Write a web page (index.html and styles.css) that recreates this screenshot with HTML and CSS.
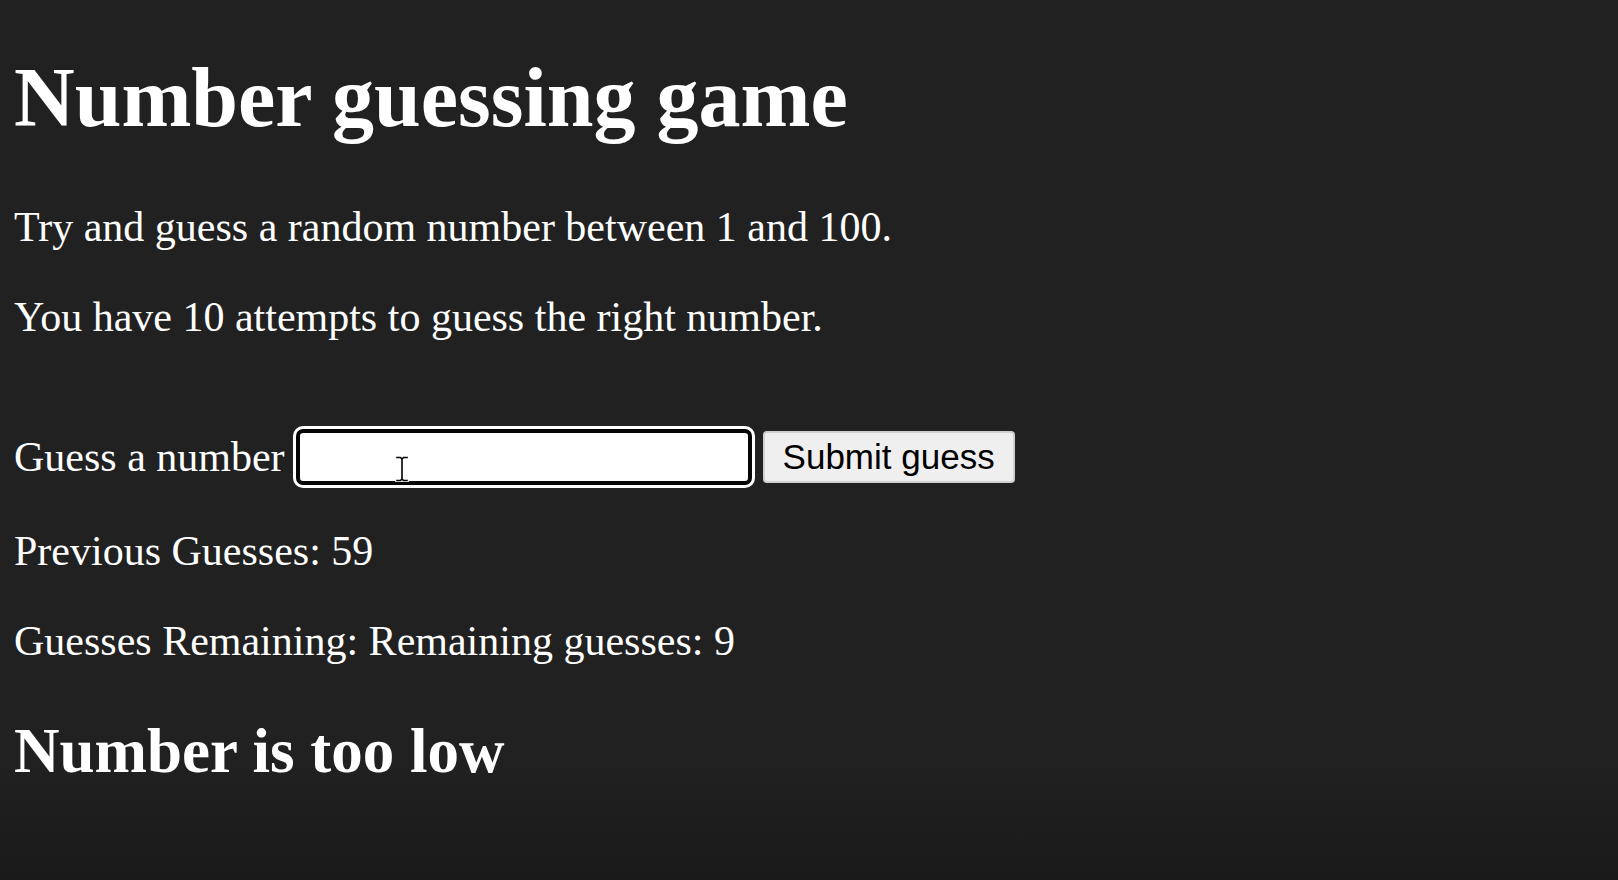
FILE: index.html
```html
<!DOCTYPE html>
<html lang="en">
<head>
<meta charset="utf-8">
<title>Number guessing game</title>
<link rel="stylesheet" href="styles.css">
</head>
<body>
<main class="page">
  <h1 class="title">Number guessing game</h1>
  <p class="text">Try and guess a random number between 1 and 100.</p>
  <p class="text">You have 10 attempts to guess the right number.</p>
  <div class="form-row">
    <label class="label" for="guessField">Guess a number</label>
    <div class="field-wrap">
      <input class="guess-field" id="guessField" type="text">
      <svg class="ibeam" width="14" height="26" viewBox="0 0 14 26" aria-hidden="true">
        <path d="M2 1.5h3.5l1.5 1.5l1.5-1.5H12M7 3v20M2 24.5h3.5l1.5-1.5l1.5 1.5H12" fill="none" stroke="#fff" stroke-width="3.5" stroke-linecap="square"/>
        <path d="M2 1.5h3.5l1.5 1.5l1.5-1.5H12M7 3v20M2 24.5h3.5l1.5-1.5l1.5 1.5H12" fill="none" stroke="#000" stroke-width="1.6" stroke-linecap="square"/>
      </svg>
    </div>
    <button class="submit" type="button">Submit guess</button>
  </div>
  <div class="results">
    <p class="text">Previous Guesses: 59</p>
    <p class="text">Guesses Remaining: Remaining guesses: 9</p>
    <h2 class="status">Number is too low</h2>
  </div>
</main>
</body>
</html>
```

FILE: styles.css
```css
html, body {
  margin: 0;
  padding: 0;
}

body {
  min-height: 880px;
  background: linear-gradient(to bottom, #212121 0%, #212121 86%, #1a1a1a 100%);
  color: #ffffff;
  font-family: "Liberation Serif", "Times New Roman", serif;
  overflow: hidden;
}

.page {
  padding: 0 0 0 14px;
  display: flow-root;
}

.title {
  font-size: 84px;
  font-weight: bold;
  line-height: 1.15;
  margin: 50px 0 56px;
}

.text {
  font-size: 42px;
  line-height: 1.15;
  margin: 0 0 42px;
}

.form-row {
  display: flex;
  align-items: center;
  gap: 11px;
  margin: 86px 0 41px;
  height: 59px;
}

.label {
  font-size: 42px;
  line-height: 1.15;
}

.field-wrap {
  position: relative;
  display: flex;
}

.guess-field {
  box-sizing: border-box;
  width: 456px;
  height: 56px;
  margin: 0;
  padding: 0 10px;
  background: #ffffff;
  border: 4px solid #050505;
  border-radius: 7px;
  box-shadow: 0 0 0 3px #ffffff;
  outline: none;
  font-size: 30px;
}

.ibeam {
  position: absolute;
  left: 99px;
  top: 27px;
}

.submit {
  box-sizing: border-box;
  width: 252px;
  height: 52px;
  margin: 0;
  padding: 0;
  background: #efefef;
  border: 2px solid #d0d0d0;
  border-radius: 4px;
  color: #000000;
  font-family: "Liberation Sans", Arial, sans-serif;
  font-size: 35px;
}

.results {
  display: flow-root;
}

.status {
  font-size: 63px;
  font-weight: bold;
  line-height: 1.15;
  margin: 49px 0 0;
}
```
